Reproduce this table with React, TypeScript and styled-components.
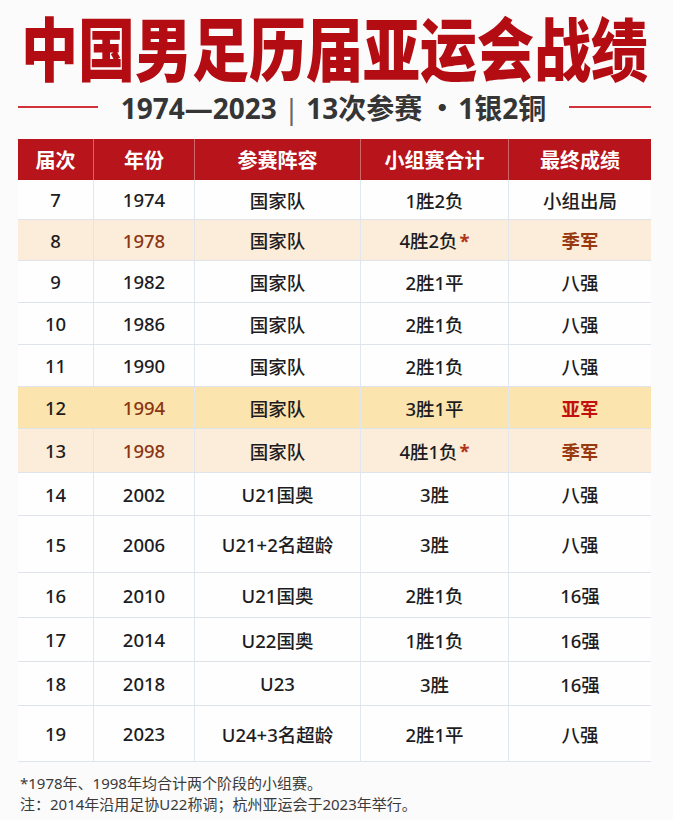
import React from "react";
import styled, { createGlobalStyle } from "styled-components";

const Global = createGlobalStyle`
  html, body { margin: 0; padding: 0; background: #fbfbfb; }
  body { font-family: "Noto Sans", "Noto Sans CJK SC", sans-serif; color: #1c1c22; }
`;

const Page = styled.div`
  width: 673px;
  height: 820px;
  overflow: hidden;
  box-sizing: border-box;
  padding: 0 22px 0 18px;
  display: flex;
  flex-direction: column;
`;

const TitleWrap = styled.div`
  display: flex;
  justify-content: center;
  align-items: center;
  height: 84px;
  margin-top: 3px;
`;

const Title = styled.h1`
  margin: 0;
  flex: none;
  font-family: "Noto Sans CJK SC", sans-serif;
  font-size: 57px;
  line-height: 64px;
  font-weight: 900;
  color: #b30c12;
  white-space: nowrap;
  transform: scaleY(1.22);
  transform-origin: center;
`;

const Sub = styled.div`
  display: flex;
  align-items: center;
  height: 40px;
`;

const Rule = styled.div<{ $w: number }>`
  flex: 0 0 ${(p) => p.$w}px;
  height: 2px;
  background: #d2333a;
`;

const SubText = styled.div`
  flex: 1;
  text-align: center;
  font-size: 28px;
  line-height: 40px;
  font-weight: 700;
  color: #353535;
  white-space: nowrap;
`;

const Bar = styled.span`
  font-weight: 400;
  color: #666;
  margin: 0 7px;
`;

const Dot = styled.span`
  font-family: "Noto Sans CJK SC", sans-serif;
  margin: 0 2px 0 6px;
`;

const Table = styled.div`
  margin-top: 12px;
  display: flex;
  flex-direction: column;
  width: 633px;
`;

const cols = "75px 101px 166px 148px 143px";

const HeadRow = styled.div`
  display: grid;
  grid-template-columns: ${cols};
  height: 41px;
  background: #b7141c;
`;

const HeadCell = styled.div`
  display: flex;
  align-items: center;
  justify-content: center;
  color: #fff;
  font-weight: 700;
  font-size: 20px;
  border-left: 1px solid rgba(255, 255, 255, 0.35);
  &:first-child { border-left: none; }
`;

type Tone = "plain" | "peach" | "gold";

const Row = styled.div<{ $h: number; $tone: Tone }>`
  display: grid;
  grid-template-columns: ${cols};
  height: ${(p) => p.$h}px;
  box-sizing: border-box;
  border-bottom: 1px solid #dfe3ea;
  background: ${(p) =>
    p.$tone === "gold" ? "#fbe4ad" : p.$tone === "peach" ? "#fcecda" : "#fefefe"};
`;

const Cell = styled.div<{ $color?: string; $bold?: boolean }>`
  display: flex;
  align-items: center;
  justify-content: center;
  font-size: 18.5px;
  color: ${(p) => p.$color || "#1c1c22"};
  font-weight: ${(p) => (p.$bold ? 700 : 500)};
  border-left: 1px solid #e2e6ed;
  white-space: nowrap;
  &:first-child { border-left: none; }
`;

const Star = styled.span`
  color: #b0361a;
  font-weight: 700;
  margin-left: 2px;
`;

const Notes = styled.div`
  margin-top: 11px;
  padding-left: 2px;
  font-size: 15px;
  line-height: 21px;
  color: #3a3a3a;
`;

type R = {
  n: string;
  y: string;
  team: string;
  rec: string;
  star?: boolean;
  res: string;
  h: number;
  tone: Tone;
};

const rows: R[] = [
  { n: "7", y: "1974", team: "国家队", rec: "1胜2负", res: "小组出局", h: 40, tone: "plain" },
  { n: "8", y: "1978", team: "国家队", rec: "4胜2负", star: true, res: "季军", h: 41, tone: "peach" },
  { n: "9", y: "1982", team: "国家队", rec: "2胜1平", res: "八强", h: 42, tone: "plain" },
  { n: "10", y: "1986", team: "国家队", rec: "2胜1负", res: "八强", h: 42, tone: "plain" },
  { n: "11", y: "1990", team: "国家队", rec: "2胜1负", res: "八强", h: 42, tone: "plain" },
  { n: "12", y: "1994", team: "国家队", rec: "3胜1平", res: "亚军", h: 42, tone: "gold" },
  { n: "13", y: "1998", team: "国家队", rec: "4胜1负", star: true, res: "季军", h: 44, tone: "peach" },
  { n: "14", y: "2002", team: "U21国奥", rec: "3胜", res: "八强", h: 43, tone: "plain" },
  { n: "15", y: "2006", team: "U21+2名超龄", rec: "3胜", res: "八强", h: 57, tone: "plain" },
  { n: "16", y: "2010", team: "U21国奥", rec: "2胜1负", res: "16强", h: 45, tone: "plain" },
  { n: "17", y: "2014", team: "U22国奥", rec: "1胜1负", res: "16强", h: 44, tone: "plain" },
  { n: "18", y: "2018", team: "U23", rec: "3胜", res: "16强", h: 44, tone: "plain" },
  { n: "19", y: "2023", team: "U24+3名超龄", rec: "2胜1平", res: "八强", h: 56, tone: "plain" },
];

const resColor = (r: R) =>
  r.res === "亚军" ? "#c2100f" : r.res === "季军" ? "#983910" : undefined;

export default function App() {
  return (
    <Page>
      <Global />
      <TitleWrap>
        <Title>中国男足历届亚运会战绩</Title>
      </TitleWrap>
      <Sub>
        <Rule $w={80} />
        <SubText>
          1974—2023<Bar>|</Bar>13次参赛<Dot>·</Dot>1银2铜
        </SubText>
        <Rule $w={82} />
      </Sub>
      <Table>
        <HeadRow>
          <HeadCell>届次</HeadCell>
          <HeadCell>年份</HeadCell>
          <HeadCell>参赛阵容</HeadCell>
          <HeadCell>小组赛合计</HeadCell>
          <HeadCell>最终成绩</HeadCell>
        </HeadRow>
        {rows.map((r) => (
          <Row key={r.n} $h={r.h} $tone={r.tone}>
            <Cell>{r.n}</Cell>
            <Cell $color={r.tone !== "plain" ? "#8a3512" : undefined}>{r.y}</Cell>
            <Cell>{r.team}</Cell>
            <Cell>
              {r.rec}
              {r.star && <Star>*</Star>}
            </Cell>
            <Cell $color={resColor(r)} $bold={!!resColor(r)}>
              {r.res}
            </Cell>
          </Row>
        ))}
      </Table>
      <Notes>
        <div>*1978年、1998年均合计两个阶段的小组赛。</div>
        <div>注：2014年沿用足协U22称调；杭州亚运会于2023年举行。</div>
      </Notes>
    </Page>
  );
}
